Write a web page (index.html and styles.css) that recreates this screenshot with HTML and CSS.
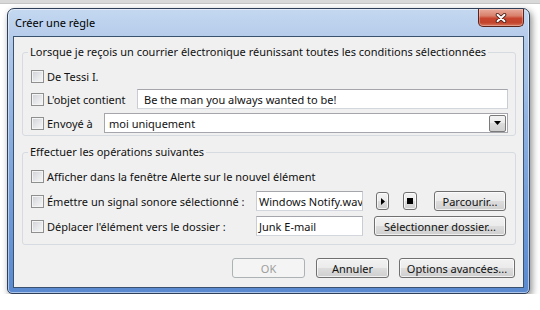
FILE: index.html
```html
<!DOCTYPE html>
<html lang="fr">
<head>
  <meta charset="UTF-8" />
  <title>Créer une règle</title>
  <link rel="stylesheet" href="styles.css">
</head>
<body>
  <div class="desk-strip"></div>
  <div class="window">
    <div class="titlebar">
      <span class="title">Créer une règle</span>
      <button class="close-btn" title="Fermer">
        <svg width="12" height="10" viewBox="0 0 12 10">
          <path d="M2.5 1.8 L9.5 8.2 M9.5 1.8 L2.5 8.2" stroke="#4a1e16" stroke-width="3.6" stroke-linecap="round"/>
          <path d="M2.5 1.8 L9.5 8.2 M9.5 1.8 L2.5 8.2" stroke="#fff" stroke-width="2" stroke-linecap="round"/>
        </svg>
      </button>
    </div>

    <div class="client">
      <fieldset class="group group-conditions">
        <legend>Lorsque je reçois un courrier électronique réunissant toutes les conditions sélectionnées</legend>
        <div class="row">
          <label class="check"><span class="box"></span>De Tessi I.</label>
        </div>
        <div class="row">
          <label class="check label-subject"><span class="box"></span>L'objet contient</label>
          <div class="field grow">Be the man you always wanted to be!</div>
        </div>
        <div class="row row-sent">
          <label class="check label-sent"><span class="box"></span>Envoyé à</label>
          <div class="combo grow">
            <span>moi uniquement</span>
            <span class="combo-btn">
              <svg width="7" height="4" viewBox="0 0 7 4"><path d="M0 0 H7 L3.5 4 Z" fill="#000"/></svg>
            </span>
          </div>
        </div>
      </fieldset>

      <fieldset class="group group-actions">
        <legend>Effectuer les opérations suivantes</legend>
        <div class="row">
          <label class="check"><span class="box"></span>Afficher dans la fenêtre Alerte sur le nouvel élément</label>
        </div>
        <div class="row">
          <label class="check label-action"><span class="box"></span>Émettre un signal sonore sélectionné :</label>
          <div class="field short">Windows Notify.wav</div>
          <button class="btn btn-play">
            <svg width="4" height="7" viewBox="0 0 4 7"><path d="M0 0 L4 3.5 L0 7 Z" fill="#000"/></svg>
          </button>
          <button class="btn btn-stop"><span class="stop-glyph"></span></button>
          <button class="btn btn-browse">Parcourir...</button>
        </div>
        <div class="row">
          <label class="check label-action"><span class="box"></span>Déplacer l'élément vers le dossier :</label>
          <div class="field short">Junk E-mail</div>
          <button class="btn btn-folder">Sélectionner dossier...</button>
        </div>
      </fieldset>

      <div class="footer">
        <button class="btn btn-ok" disabled>OK</button>
        <button class="btn btn-cancel">Annuler</button>
        <button class="btn btn-advanced">Options avancées...</button>
      </div>
    </div>
  </div>
</body>
</html>
```

FILE: styles.css
```css
* {
  box-sizing: border-box;
}

body {
  margin: 0;
  background-color: #fff;
  color: #111;
  font-family: "Noto Sans", "Open Sans", sans-serif;
  font-size: 11px;
}

.desk-strip {
  height: 4px;
  background-color: #d9d9d9;
  border-bottom: 1px solid #c6c6c6;
}

.window {
  width: 523px;
  height: 286px;
  margin: 4px 0 0 7px;
  padding: 0 5px 5px 5px;
  display: flex;
  flex-direction: column;
  border: 1px solid #2e3f57;
  border-radius: 7px 7px 5px 5px;
  background: linear-gradient(180deg, #c4d8f0 0, #b4cbea 30px, #8db0e0 120px, #6d99d7 210px, #5a89d0 100%);
  box-shadow: inset 0 0 0 1px rgba(255, 255, 255, 0.5), 2px 3px 7px rgba(0, 0, 0, 0.45);
}

.titlebar {
  height: 27px;
  display: flex;
  justify-content: space-between;
  align-items: flex-start;
}

.title {
  padding: 6px 0 0 2px;
  line-height: 16px;
  font-size: 11px;
  color: #000;
}

.close-btn {
  width: 46px;
  height: 18px;
  padding: 0;
  display: flex;
  align-items: center;
  justify-content: center;
  border: 1px solid #5a241a;
  border-top: none;
  border-radius: 0 0 5px 5px;
  background: linear-gradient(180deg, #e9aa9b 0, #d8806c 40%, #c8452f 55%, #c2452c 80%, #d8775e 100%);
  box-shadow: inset 0 0 0 1px rgba(255, 255, 255, 0.3);
}

.client {
  flex: 1;
  display: flex;
  flex-direction: column;
  background-color: #f0f0f0;
  border: 1px solid #3b526e;
}

.group {
  margin: 7px 7px 0 8px;
  padding: 6px 7px 2px 8px;
  min-width: 0;
  border: 1px solid #d5dbe0;
  border-radius: 3px;
}

.group legend {
  margin-left: -3px;
  padding: 0 2px;
  line-height: 16px;
}

.group-actions {
  margin-top: 8px;
  padding-bottom: 8px;
}

.row {
  height: 20px;
  display: flex;
  align-items: center;
}

.group-conditions .row + .row {
  margin-top: 3px;
}

.group-conditions .row-sent {
  margin-top: 4px !important;
}

.group-actions .row + .row {
  margin-top: 5px;
}

.check {
  display: flex;
  align-items: center;
  gap: 3px;
  white-space: nowrap;
  flex: none;
}

.box {
  width: 13px;
  height: 13px;
  flex: none;
  border: 1px solid #8e8f8f;
  background: linear-gradient(135deg, #ced1d6 0, #e9eaec 60%, #f6f6f6 100%);
  box-shadow: inset 0 0 0 1px #f4f4f4;
}

.label-subject {
  width: 106px;
}

.label-sent {
  width: 73px;
}

.label-action {
  width: 225px;
}

.field {
  height: 20px;
  display: flex;
  align-items: center;
  padding: 0 6px;
  background-color: #fff;
  border: 1px solid #abadb3;
  border-color: #a4a6ab #c9ccd2 #d3d6dc #c9ccd2;
  white-space: nowrap;
  overflow: hidden;
}

.grow {
  flex: 1;
}

.field.short {
  width: 107px;
  padding: 0 2px;
}

.combo {
  height: 20px;
  display: flex;
  align-items: center;
  justify-content: space-between;
  padding: 0 1px 0 4px;
  background-color: #fff;
  border: 1px solid #a4a6ab;
}

.combo-btn {
  width: 17px;
  height: 17px;
  display: flex;
  align-items: center;
  justify-content: center;
  border: 1px solid #7a7a7a;
  border-radius: 2px;
  background: linear-gradient(180deg, #f3f3f3 0, #ebebeb 50%, #dcdcdc 50%, #cfcfcf 100%);
}

.btn {
  height: 20px;
  padding: 0;
  display: flex;
  align-items: center;
  justify-content: center;
  font: inherit;
  color: #111;
  border: 1px solid #707070;
  border-radius: 3px;
  background: linear-gradient(180deg, #f2f2f2 0, #ebebeb 50%, #dddddd 50%, #cfcfcf 100%);
  box-shadow: inset 0 0 0 1px rgba(255, 255, 255, 0.7);
}

.btn-play {
  width: 13px;
  height: 18px;
  margin-left: 13px;
}

.btn-stop {
  width: 14px;
  height: 18px;
  margin-left: 14px;
}

.stop-glyph {
  width: 6px;
  height: 6px;
  background-color: #000;
}

.btn-browse {
  width: 72px;
  margin-left: 17px;
}

.btn-folder {
  width: 132px;
  margin-left: 11px;
}

.footer {
  display: flex;
  justify-content: flex-end;
  margin-top: 13px;
  padding-right: 8px;
}

.btn-ok {
  width: 73px;
  color: #9d9d9d;
  border-color: #adb2b5;
  background: #f4f4f4;
  box-shadow: none;
}

.btn-cancel {
  width: 73px;
  margin-left: 11px;
}

.btn-advanced {
  width: 116px;
  margin-left: 10px;
}
```
